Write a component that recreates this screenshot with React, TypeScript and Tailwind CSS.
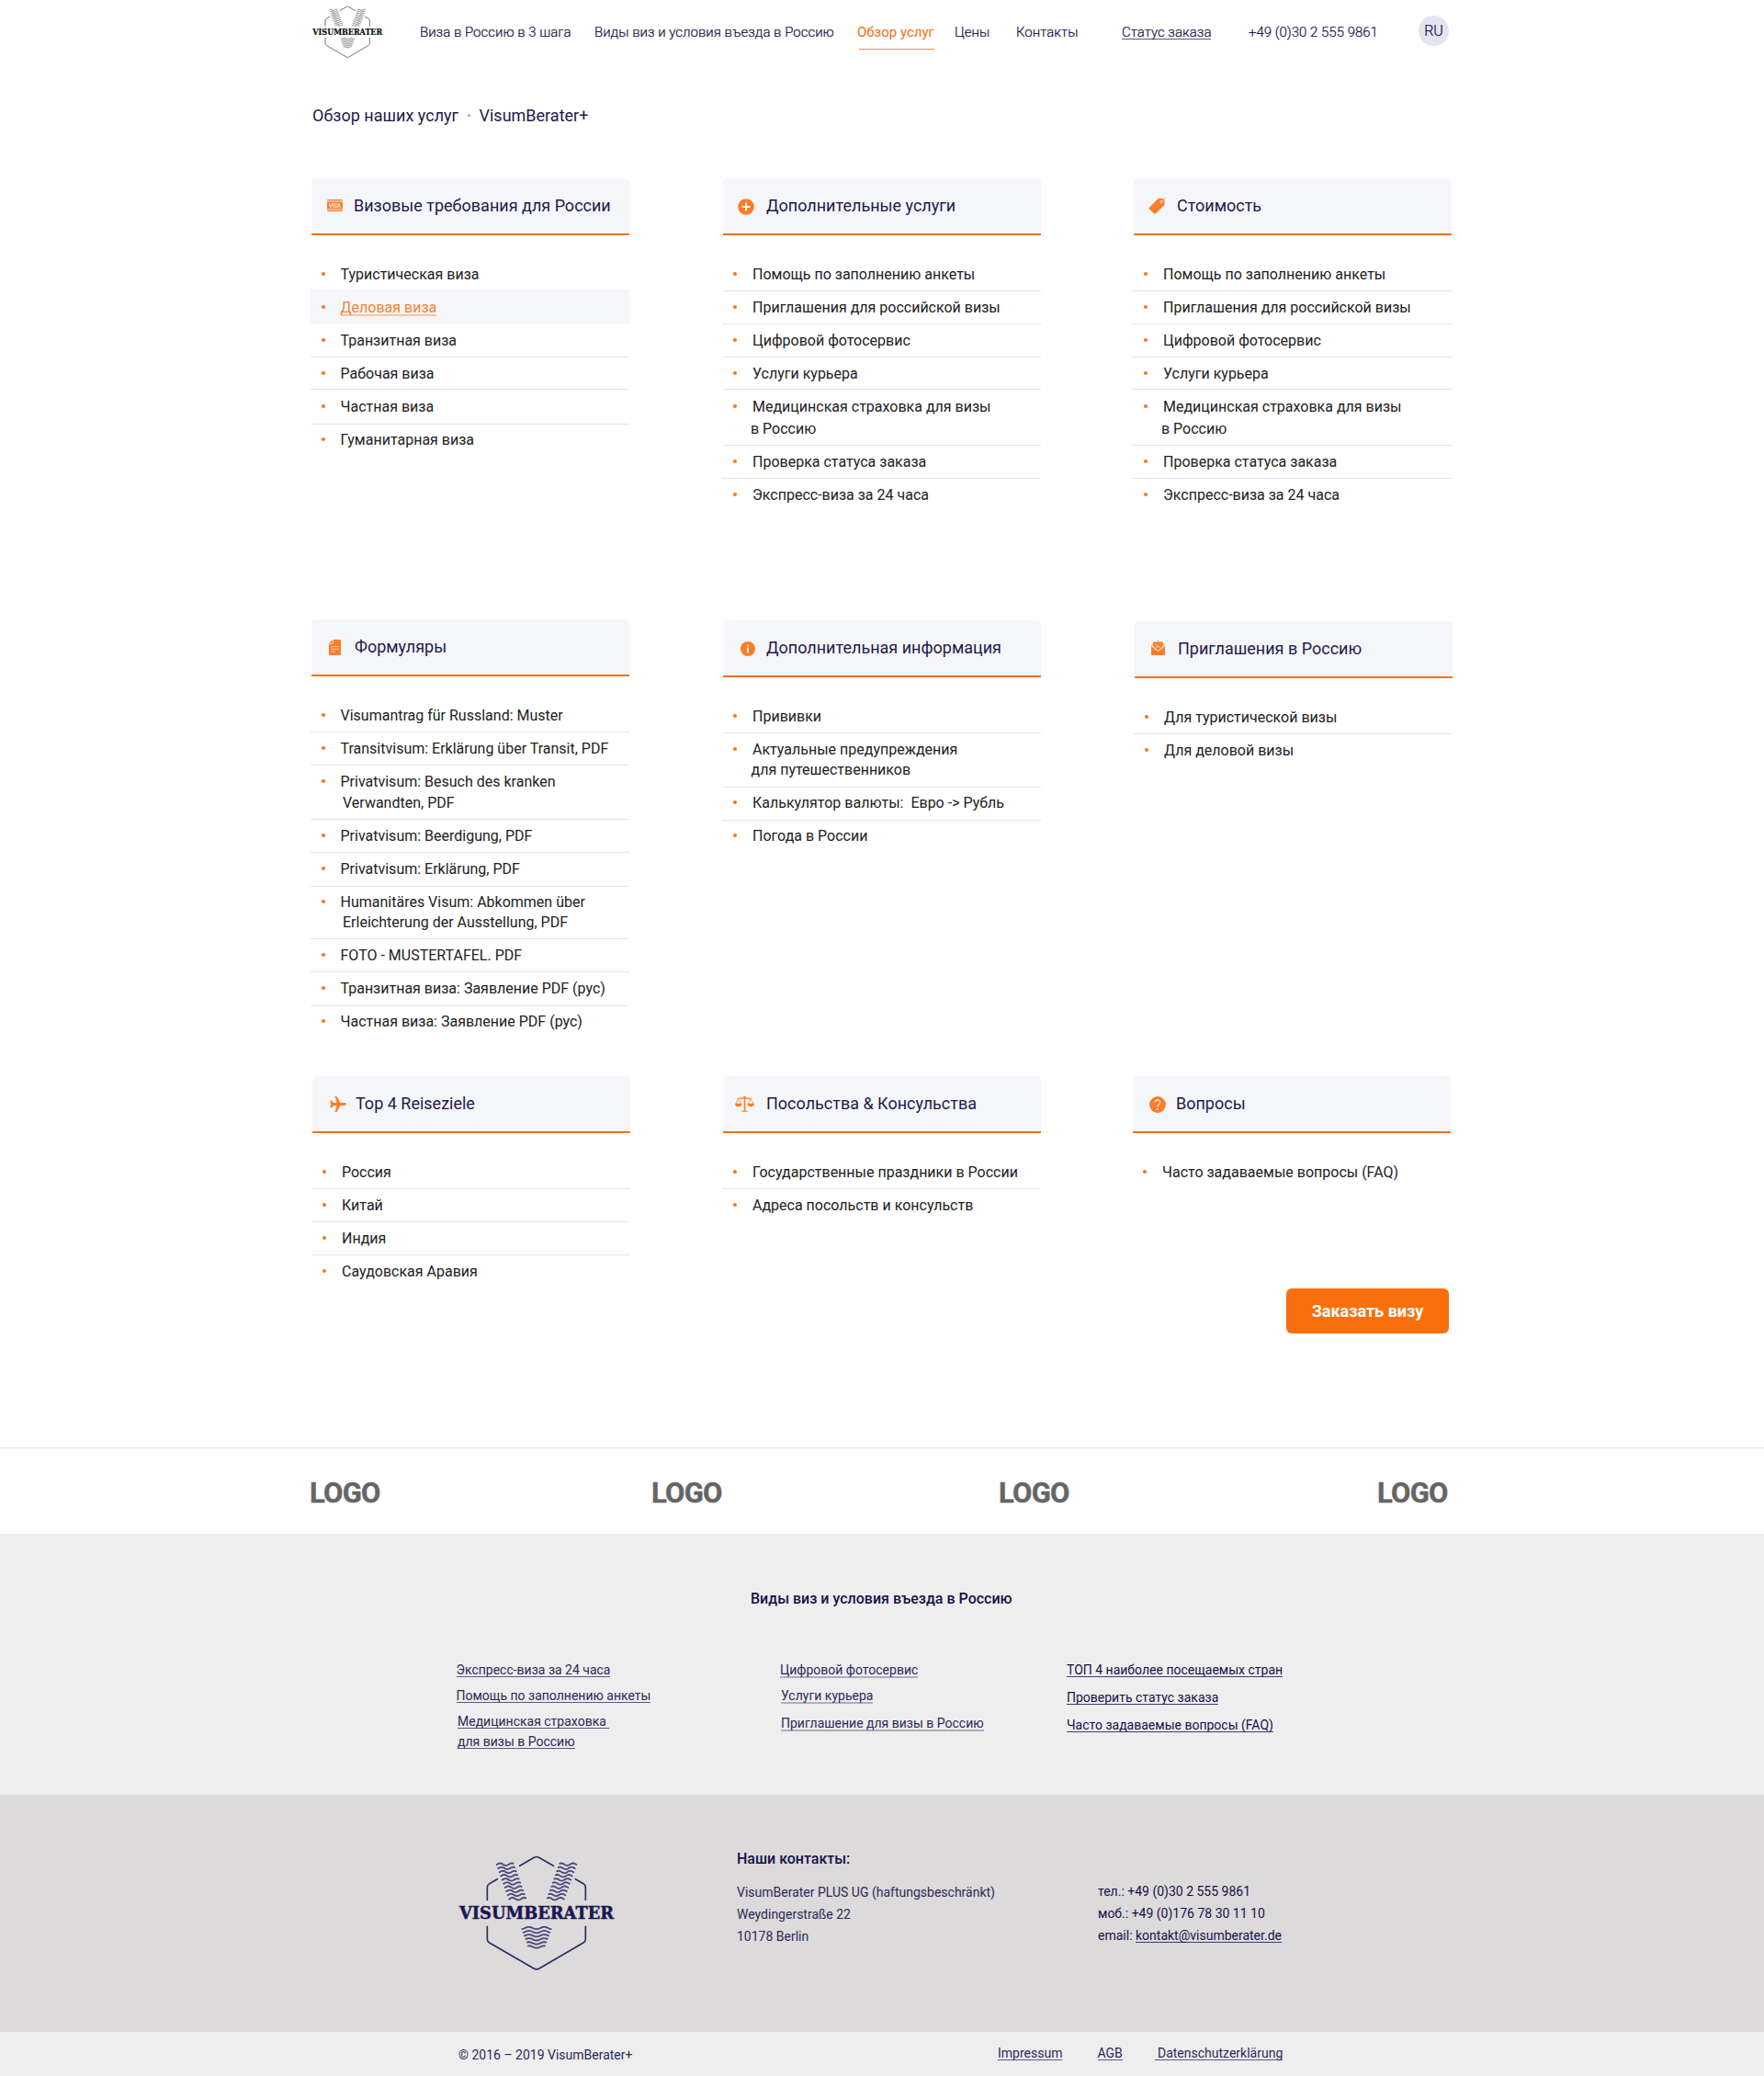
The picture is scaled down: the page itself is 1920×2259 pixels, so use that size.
import type { ReactNode } from 'react'

/* ---------- Brand mark ---------- */

const wave = (x0: number, x1: number, y: number, center: number, period: number) => {
  let d = ''
  for (let x = x0; x <= x1; x += 2) {
    const dy = Math.cos(((x - center) / period) * Math.PI * 2) * 3.6
    d += `${d ? 'L' : 'M'}${x.toFixed(1)} ${(y + dy).toFixed(1)}`
  }
  return d
}

const armRows = Array.from({ length: 10 }, (_, i) => {
  const x = 181 + i * 4.5
  return wave(x, x + 55, 266 + i * 12.5, x + 30, 38)
})

const tipRows = Array.from({ length: 6 }, (_, i) => wave(264 + i * 4, 358 - i * 4, 474 + i * 12.3, 311, 50))

function BrandMark({ className, ink, frame, waves }: { className: string; ink: string; frame: string; waves: string }) {
  return (
    <svg className={`overflow-visible ${className}`} viewBox="50 234 525 383" fill="none" strokeLinecap="round" strokeLinejoin="round">
      <g className={frame} strokeWidth="5">
        <path d="M256 271L303 244Q311 239 319 244L366 271" />
        <path d="M183 314L157 329Q150 333 150 341V382" />
        <path d="M438 314L464 329Q471 333 471 341V382" />
        <path d="M150 469V511Q150 518 157 522L302 606Q311 611 320 606L464 522Q471 518 471 511V469" />
      </g>
      <g className={waves} strokeWidth="5.4">
        {armRows.map((d) => (
          <path key={d} d={d} />
        ))}
        <g transform="matrix(-1 0 0 1 622 0)">
          {armRows.map((d) => (
            <path key={d} d={d} />
          ))}
        </g>
        {tipRows.map((d) => (
          <path key={d} d={d} />
        ))}
      </g>
      <text
        x="59"
        y="445"
        className={ink}
        strokeWidth="1.5"
        fontFamily="'DejaVu Serif', serif"
        fontWeight="700"
        fontSize="56"
        textLength="504"
        lengthAdjust="spacingAndGlyphs"
      >
        VISUMBERATER
      </text>
    </svg>
  )
}

/* ---------- Card icons ---------- */

const VisaIcon = () => (
  <svg className="ml-[17px] mt-[23px] h-[13px] w-[17px]" viewBox="0 0 17 13">
    <path d="M0 1Q0 0 1 0H16Q17 0 17 1V1.6H0ZM0 2.4H17V10.6H0ZM0 11.4H17V12Q17 13 16 13H1Q0 13 0 12Z" fill="#fb7d27" />
    <text x="2" y="9" fontFamily="Roboto, sans-serif" fontWeight="700" fontSize="6.5" textLength="13" fill="#f5e3d8">
      VISA
    </text>
  </svg>
)

const PlusIcon = () => (
  <svg className="ml-4 mt-[21.5px] h-[18px] w-[18px]" viewBox="0 0 18 18">
    <circle cx="9" cy="9" r="8.8" fill="#fb7d27" />
    <path d="M9 4.6V13.4M4.6 9H13.4" stroke="#f5f6fa" strokeWidth="2" />
  </svg>
)

const TagIcon = () => (
  <svg className="ml-[15.5px] mt-[21px] h-[18px] w-[19px]" viewBox="0 0 19 18">
    <path d="M.6 11.2L10.4 1.2Q11 .7 11.8.8L16 1.3Q17.2 1.5 17.3 2.6L17.7 6.8Q17.7 7.6 17.2 8.2L7.6 17.6Q7 18 6.5 17.6L.6 12.2Q.2 11.7.6 11.2Z" fill="#fb7d27" />
    <circle cx="14" cy="4.8" r="1.3" fill="none" stroke="#f5f6fa" strokeWidth=".8" />
    <path d="M14.4 4.4L18.2.4" stroke="#fb7d27" strokeWidth="1" />
    <path d="M14.4 4.4L17 1.7" stroke="#f5f6fa" strokeWidth=".5" />
  </svg>
)

const DocumentIcon = () => (
  <svg className="ml-[19px] mt-[22px] h-[17px] w-[13px]" viewBox="0 0 13 17">
    <path d="M4.6 0H12Q13 0 13 1V16Q13 17 12 17H1Q0 17 0 16V4.6H3.6Q4.6 4.6 4.6 3.6Z" fill="#fb7d27" />
    <path d="M3.8.2V3.8H.2Z" fill="#fb7d27" />
    <path d="M2.7 7.6H10.6M2.7 10.4H10.6M2.7 13.2H6.6" stroke="#f8dcc9" strokeWidth="1" />
  </svg>
)

const InfoIcon = () => (
  <svg className="ml-[18.5px] mt-[23px] h-4 w-4" viewBox="0 0 16 16">
    <circle cx="8" cy="8" r="8" fill="#fb7d27" />
    <path d="M8 6.6V12.2" stroke="#f5f6fa" strokeWidth="2" />
    <circle cx="8" cy="4.5" r="1.1" fill="#f5f6fa" />
  </svg>
)

const InvitationIcon = () => (
  <svg className="ml-[18px] mt-[21px] h-4 w-[15px]" viewBox="0 0 15 16">
    <path d="M0 6L7.5 12L15 6V15Q15 16 14 16H1Q0 16 0 15Z" fill="#fb7d27" />
    <path d="M2.2 1.4H12.8V6.6L7.5 10.8L2.2 6.6Z" fill="#fb7d27" />
    <path d="M1.5 3.2L.3 5L1.5 6ZM13.5 3.2L14.7 5L13.5 6ZM6 .9L7.5 0L9 .9Z" fill="#fb7d27" />
    <path d="M5 4.8H7.4M5 6.8H10" stroke="#f8dcc9" strokeWidth=".9" />
  </svg>
)

const PlaneIcon = () => (
  <svg className="ml-[19px] mt-[22px] h-[17px] w-[18px]" viewBox="0 0 18 17">
    <path
      d="M18 8.5Q18 9.9 15.6 9.9H11.4L7.8 16.4Q7.5 17 6.8 17H5.6L7.5 9.9H4L2.3 12.2Q2 12.6 1.5 12.6H.3L1.3 8.5L.3 4.4H1.5Q2 4.4 2.3 4.8L4 7.1H7.5L5.6 0H6.8Q7.5 0 7.8.6L11.4 7.1H15.6Q18 7.1 18 8.5Z"
      fill="#fb7d27"
    />
  </svg>
)

const ScalesIcon = () => (
  <svg className="ml-[13px] mt-[21px] h-[18px] w-[21px]" viewBox="0 0 21 18" fill="none" stroke="#fb7d27">
    <path d="M10.5 2V16.5" strokeWidth="1.7" />
    <path d="M3.5 3.2H8.5Q9.4 2.1 10.5 2.1T12.5 3.2H17.5" strokeWidth="1.3" />
    <path d="M3.8 3.4L1 9M3.8 3.4L6.6 9M17.2 3.4L14.4 9M17.2 3.4L20 9" strokeWidth=".8" />
    <path d="M0 8.7H7.6Q7.2 12.2 3.8 12.2T0 8.7ZM13.4 8.7H21Q20.6 12.2 17.2 12.2T13.4 8.7ZM9.5 1.2Q10.5-.4 11.5 1.2V3H9.5ZM7 17.8Q7 16.2 10.5 16.2T14 17.8Z" fill="#fb7d27" stroke="none" />
  </svg>
)

const QuestionIcon = () => (
  <svg className="ml-[18px] mt-[22px] h-[18px] w-[18px]" viewBox="0 0 18 18">
    <circle cx="9" cy="9" r="8.9" fill="#fb7d27" />
    <path d="M6.3 6.4Q6.4 3.8 9 3.8T11.7 6.3Q11.7 7.6 10.2 8.8Q9 9.8 9 11.6" fill="none" stroke="#f5f6fa" strokeWidth="1.2" />
    <circle cx="9" cy="14" r=".9" fill="#f5f6fa" />
  </svg>
)

/* ---------- Cards ---------- */

type Item = { text: string; more?: string; row?: string; moreClass?: string; active?: boolean }
type CardData = { title: string; titleClass?: string; icon: ReactNode; items: Item[]; shift?: string; textClass?: string }

const services: Item[] = [
  { text: 'Помощь по заполнению анкеты' },
  { text: 'Приглашения для российской визы' },
  { text: 'Цифровой фотосервис' },
  { text: 'Услуги курьера', row: 'h-[35px] pt-1.5' },
  { text: 'Медицинская страховка для визы', more: 'в Россию', row: 'h-[61px] pt-[7px]', moreClass: 'mt-px -ml-[2px]' },
  { text: 'Проверка статуса заказа' },
  { text: 'Экспресс-виза за 24 часа' },
]

const cards: CardData[] = [
  {
    title: 'Визовые требования для России',
    titleClass: '-ml-px',
    textClass: 'ml-[16.5px]',
    icon: <VisaIcon />,
    items: [
      { text: 'Туристическая виза', row: 'h-[34px] border-b-0! pt-1.5' },
      { text: 'Деловая виза', row: 'h-[38px] border-b-0! pt-2', active: true },
      { text: 'Транзитная виза' },
      { text: 'Рабочая виза', row: 'h-[35px] pt-1.5' },
      { text: 'Частная виза', row: 'h-[38px] pt-[7px]' },
      { text: 'Гуманитарная виза', row: 'h-9 pt-[5px]' },
    ],
  },
  { title: 'Дополнительные услуги', icon: <PlusIcon />, items: services },
  { title: 'Стоимость', icon: <TagIcon />, items: services },
  {
    title: 'Формуляры',
    textClass: 'ml-[16.5px]',
    icon: <DocumentIcon />,
    items: [
      { text: 'Visumantrag für Russland: Muster' },
      { text: 'Transitvisum: Erklärung über Transit, PDF' },
      { text: 'Privatvisum: Besuch des kranken', more: 'Verwandten, PDF', row: 'h-[59px] pt-1.5', moreClass: 'ml-[2.5px]' },
      { text: 'Privatvisum: Beerdigung, PDF' },
      { text: 'Privatvisum: Erklärung, PDF', row: 'h-[37px] pt-1.5' },
      {
        text: 'Humanitäres Visum: Abkommen über',
        more: 'Erleichterung der Ausstellung, PDF',
        row: 'h-[57px] pt-[5px]',
        moreClass: '-mt-px ml-[2.5px]',
      },
      { text: 'FOTO - MUSTERTAFEL. PDF' },
      { text: 'Транзитная виза: Заявление PDF (рус)', row: 'h-[37px] pt-1.5' },
      { text: 'Частная виза: Заявление PDF (рус)', row: 'h-9 pt-[5px]' },
    ],
  },
  {
    title: 'Дополнительная информация',
    icon: <InfoIcon />,
    shift: 'mt-px',
    items: [
      { text: 'Прививки' },
      { text: 'Актуальные предупреждения', more: 'для путешественников', row: 'h-[59px] pt-1.5', moreClass: '-mt-px -ml-[1.5px]' },
      { text: 'Калькулятор валюты:\u00a0 Евро -> Рубль', row: 'h-9 pt-[5px]' },
      { text: 'Погода в России', row: 'h-9 pt-[5px]' },
    ],
  },
  {
    title: 'Приглашения в Россию',
    icon: <InvitationIcon />,
    shift: 'mt-0.5 ml-px',
    items: [{ text: 'Для туристической визы' }, { text: 'Для деловой визы' }],
  },
  {
    title: 'Top 4 Reiseziele',
    icon: <PlaneIcon />,
    shift: 'ml-px',
    items: [{ text: 'Россия' }, { text: 'Китай' }, { text: 'Индия' }, { text: 'Саудовская Аравия' }],
  },
  {
    title: 'Посольства & Консульства',
    icon: <ScalesIcon />,
    items: [{ text: 'Государственные праздники в России' }, { text: 'Адреса посольств и консульств' }],
  },
  {
    title: 'Вопросы',
    icon: <QuestionIcon />,
    shift: '-ml-px',
    items: [{ text: 'Часто задаваемые вопросы (FAQ)' }],
  },
]

function Card({ card }: { card: CardData }) {
  return (
    <article className={`w-[347px] ${card.shift ?? ''}`}>
      <header className="ml-px flex h-[62px] rounded-t-[5px] border-b-2 border-[#f5700f] bg-[#f5f6fa]">
        <div className="w-[47px] shrink-0">{card.icon}</div>
        <h2 className={`pt-[18px] text-[18px] leading-6 whitespace-nowrap text-[#1f1a4b] ${card.titleClass ?? ''}`}>{card.title}</h2>
      </header>
      <ul className="mt-[25px] text-base leading-[23px] text-[#222222]">
        {card.items.map((item) => (
          <li
            key={item.text}
            className={`flex border-[#e5e5e5] not-last:border-b ${item.row ?? 'h-9 pt-1.5'} ${item.active ? 'bg-[#f5f6fa]' : ''}`}
          >
            <i className="mt-[8.5px] ml-3 size-1 shrink-0 rounded-full bg-[#f97316]" />
            <a href="#" className={`whitespace-nowrap ${card.textClass ?? 'ml-[17px]'}`}>
              <span className={item.active ? 'inline-block h-[21px] border-b-2 border-[#fbc4a3] text-[#f58233]' : ''}>{item.text}</span>
              {item.more && <span className={`block ${item.moreClass}`}>{item.more}</span>}
            </a>
          </li>
        ))}
      </ul>
    </article>
  )
}

/* ---------- Page ---------- */

const link = 'block w-fit h-4 border-b leading-[17px] whitespace-pre'
const softLink = 'block w-fit h-[17px] border-b-2 leading-[17px] whitespace-pre border-[#aeabc2]'

export default function App() {
  return (
    <div className="h-[2259px] w-[1920px] overflow-hidden bg-white font-['Roboto',sans-serif] text-[#1f1a4b]">
      <header className="mx-auto flex h-[68px] w-[1244px]">
        <BrandMark
          className="mt-[5.7px] ml-[0.6px] h-[57.6px] w-[79px]"
          ink="fill-[#111111] stroke-[#111111]"
          frame="stroke-[#4a4a4a]"
          waves="stroke-[#606060]"
        />
        <nav className="ml-[39.4px] flex pt-[25px] text-[15px] leading-5 font-light whitespace-nowrap text-[#150f45] [-webkit-text-stroke:0.2px]">
          <a href="#" className="w-[190px]">Виза в Россию в 3 шага</a>
          <a href="#" className="w-[286px]">Виды виз и условия въезда в Россию</a>
          <a href="#" className="w-[106px] text-[#f76d0c]">
            <span className="font-normal [-webkit-text-stroke:0]">Обзор услуг</span>
            <span className="mt-2 ml-[2px] block h-px w-[82px] bg-[#f98b3d]" />
          </a>
          <a href="#" className="w-[67px]">Цены</a>
          <a href="#" className="w-[115px]">Контакты</a>
          <a href="#" className="w-[138px]">
            <span className="inline-block h-[18px] border-b border-[#5a5684]">Статус заказа</span>
          </a>
          <a href="#" className="w-[185px]">+49 (0)30 2 555 9861</a>
        </nav>
        <span className="mt-[17px] flex size-[33px] items-center justify-center rounded-full bg-[#e2e4f0] text-base font-light text-[#150f45] [-webkit-text-stroke:0.2px]">
          RU
        </span>
      </header>

      <main className="mx-auto w-[1244px]">
        <h1 className="ml-0.5 flex h-[126px] items-start pt-[46px] text-[18px] leading-6 whitespace-nowrap">
          <span className="w-[169px]">Обзор наших услуг</span>
          <span className="mt-[10px] mr-[9.5px] size-[3px] rounded-full bg-[#a5a3b7]" />
          <span>VisumBerater+</span>
        </h1>

        <div className="grid grid-cols-[448px_447px_349px] grid-rows-[480px_497px_231px]">
          {cards.map((card) => (
            <Card key={card.title} card={card} />
          ))}
        </div>

        <div className="flex justify-end pr-[5px]">
          <button className="h-[49px] w-[177px] rounded-md bg-[#f96f0d] text-[18px] font-bold text-white">Заказать визу</button>
        </div>
      </main>

      <section className="mt-[124px] h-[94px] border-t border-[#e2e2e2]">
        <div className="mx-auto flex w-[1246px] pt-[31px] text-[31px] leading-9 font-bold tracking-[-0.75px] text-[#656565] [-webkit-text-stroke:0.4px]">
          <span className="w-[372px]">LOGO</span>
          <span className="w-[378px]">LOGO</span>
          <span className="w-[412px]">LOGO</span>
          <span>LOGO</span>
        </div>
      </section>

      <section className="h-[284px] bg-[#eeeeee] pt-[59px]">
        <h3 className="ml-[817px] text-base leading-[23px] font-medium text-[#15114a]">Виды виз и условия въезда в Россию</h3>
        <div className="ml-[496.5px] flex pt-[58px] text-sm text-[#2c2858]">
          <div className="w-[352.5px]">
            <a href="#" className={`${link} border-[#5a5684]`}>Экспресс-виза за 24 часа</a>
            <a href="#" className={`${link} mt-3 border-[#5a5684]`}>Помощь по заполнению анкеты</a>
            <a href="#" className={`${link} mt-3 ml-[1.5px] border-[#5a5684]`}>{'Медицинская страховка '}</a>
            <a href="#" className={`${link} mt-1.5 ml-[1.5px] border-[#5a5684]`}>для визы в Россию</a>
          </div>
          <div className="w-[312px]">
            <a href="#" className={softLink}>Цифровой фотосервис</a>
            <a href="#" className={`${softLink} mt-[11px] ml-px`}>Услуги курьера</a>
            <a href="#" className={`${softLink} mt-[13px] ml-px`}>Приглашение для визы в Россию</a>
          </div>
          <div className="text-[#15114a]">
            <a href="#" className={`${link} border-[#3f3b6c]`}>ТОП 4 наиболее посещаемых стран</a>
            <a href="#" className={`${link} mt-3.5 border-[#3f3b6c]`}>Проверить статус заказа</a>
            <a href="#" className={`${link} mt-3.5 border-[#3f3b6c]`}>Часто задаваемые вопросы (FAQ)</a>
          </div>
        </div>
      </section>

      <section className="flex h-[258px] bg-[#dcdadb] text-sm leading-6">
        <BrandMark
          className="mt-[65px] ml-[496.5px] h-[127.7px] w-[175px]"
          ink="fill-[#1b1650] stroke-[#1b1650]"
          frame="stroke-[#2f2b62]"
          waves="stroke-[#4a467c]"
        />
        <div className="ml-[130.5px] w-[393px] pt-[58px] text-[#2c2858]">
          <h4 className="mb-[13px] text-base leading-[23px] font-medium text-[#15114a]">Наши контакты:</h4>
          <p>VisumBerater PLUS UG (haftungsbeschränkt)</p>
          <p>Weydingerstraße 22</p>
          <p>10178 Berlin</p>
        </div>
        <div className="pt-[93px] whitespace-nowrap text-[#15114a]">
          <p>тел.: +49 (0)30 2 555 9861</p>
          <p>моб.: +49 (0)176 78 30 11 10</p>
          <p className="flex items-baseline">
            email:&nbsp;
            <a href="#" className="block h-4 border-b border-[#3f3b6c] leading-[17px]">kontakt@visumberater.de</a>
          </p>
        </div>
      </section>

      <footer className="flex h-12 bg-[#eeeeee] text-sm text-[#2c2858]">
        <p className="ml-[499px] w-[587px] pt-[17px] leading-[17px]">© 2016 – 2019 VisumBerater+</p>
        <div className="w-[108.5px] pt-[15px]"><a href="#" className={`${link} border-[#5a5684]`}>Impressum</a></div>
        <div className="w-[62px] pt-[15px]"><a href="#" className={`${link} border-[#5a5684]`}>AGB</a></div>
        <div className="pt-[15px]"><a href="#" className={`${link} border-[#5a5684]`}>{' Datenschutzerklärung'}</a></div>
      </footer>
    </div>
  )
}
